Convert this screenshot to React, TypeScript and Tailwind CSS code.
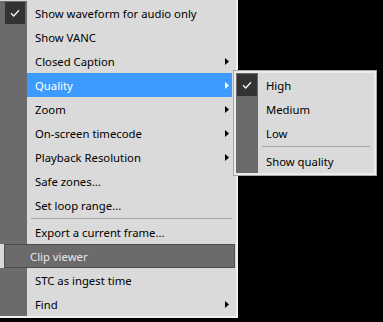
import React from 'react';

type Item =
  | { kind: 'item'; label: string; checked?: boolean; sub?: boolean; active?: boolean }
  | { kind: 'sep' }
  | { kind: 'header'; label: string };

const mainItems: Item[] = [
  { kind: 'item', label: 'Show waveform for audio only', checked: true },
  { kind: 'item', label: 'Show VANC' },
  { kind: 'item', label: 'Closed Caption', sub: true },
  { kind: 'item', label: 'Quality', sub: true, active: true },
  { kind: 'item', label: 'Zoom', sub: true },
  { kind: 'item', label: 'On-screen timecode', sub: true },
  { kind: 'item', label: 'Playback Resolution', sub: true },
  { kind: 'item', label: 'Safe zones...' },
  { kind: 'item', label: 'Set loop range...' },
  { kind: 'sep' },
  { kind: 'item', label: 'Export a current frame...' },
  { kind: 'header', label: 'Clip viewer' },
  { kind: 'item', label: 'STC as ingest time' },
  { kind: 'item', label: 'Find', sub: true },
];

const qualityItems: Item[] = [
  { kind: 'item', label: 'High', checked: true },
  { kind: 'item', label: 'Medium' },
  { kind: 'item', label: 'Low' },
  { kind: 'sep' },
  { kind: 'item', label: 'Show quality' },
];

function Check() {
  return (
    <svg width="10" height="8" viewBox="0 0 10 8">
      <path d="M1 4.2 L3.8 7 L9 1.2" fill="none" stroke="#f2f2f2" strokeWidth="1.4" />
    </svg>
  );
}

function Arrow({ white }: { white?: boolean }) {
  return (
    <svg width="4" height="7" viewBox="0 0 4 7" className="shrink-0">
      <path d="M0 0 L4 3.5 L0 7 Z" fill={white ? '#ffffff' : '#000000'} />
    </svg>
  );
}

function MenuRow({ item, gutter, sepH }: { item: Item; gutter: string; sepH: string }) {
  if (item.kind === 'sep') {
    return (
      <div className={`flex ${sepH}`}>
        <div className={`${gutter} bg-[#6b6b6b]`} />
        <div className="flex-1 px-[4px] pt-[1px]">
          <div className="h-[1px] bg-[#a3a3a3]" />
        </div>
      </div>
    );
  }
  if (item.kind === 'header') {
    return (
      <div className="flex h-[24px] pl-[4px] pr-[1px]">
        <div className="flex flex-1 items-center border border-[#4d4d4d] bg-[#6b6b6b] pl-[25px] pt-[2px] text-[#e8e8e8]">
          {item.label}
        </div>
      </div>
    );
  }
  return (
    <div className="flex h-[24px]">
      <div className={`${gutter} flex items-center justify-center bg-[#6b6b6b]`}>
        {item.checked && (
          <div className="flex h-[22px] w-[20px] items-center justify-center bg-[#333333]">
            <Check />
          </div>
        )}
      </div>
      <div
        className={`mr-[4px] flex flex-1 items-center pl-[8px] pr-[3px] ${
          item.active ? 'bg-[#3d9bff] text-white' : 'text-black'
        }`}
      >
        <span className="flex-1 whitespace-nowrap pt-[2px]">{item.label}</span>
        {item.sub && <Arrow white={item.active} />}
      </div>
    </div>
  );
}

export default function App() {
  return (
    <div
      className="relative h-[322px] w-[383px] overflow-hidden bg-black text-[11.3px]"
      style={{ fontFamily: '"Noto Sans", "Open Sans", sans-serif' }}
    >
      <div className="w-[238px] border-b-2 border-r-2 border-[#efefef] bg-[#dadada] pt-[1px]">
        {mainItems.map((it, i) => (
          <MenuRow key={i} item={it} gutter="w-[27px] pl-[3px] pr-[1px]" sepH="h-[3px]" />
        ))}
      </div>

      <div className="absolute left-[233px] top-[70px] w-[144px] border border-[#a8a8a8] bg-[#dadada]">
        <div className="border-2 border-[#ececec]">
          {qualityItems.map((it, i) => (
            <MenuRow key={i} item={it} gutter="w-[22px]" sepH="h-[4px]" />
          ))}
        </div>
      </div>
    </div>
  );
}
